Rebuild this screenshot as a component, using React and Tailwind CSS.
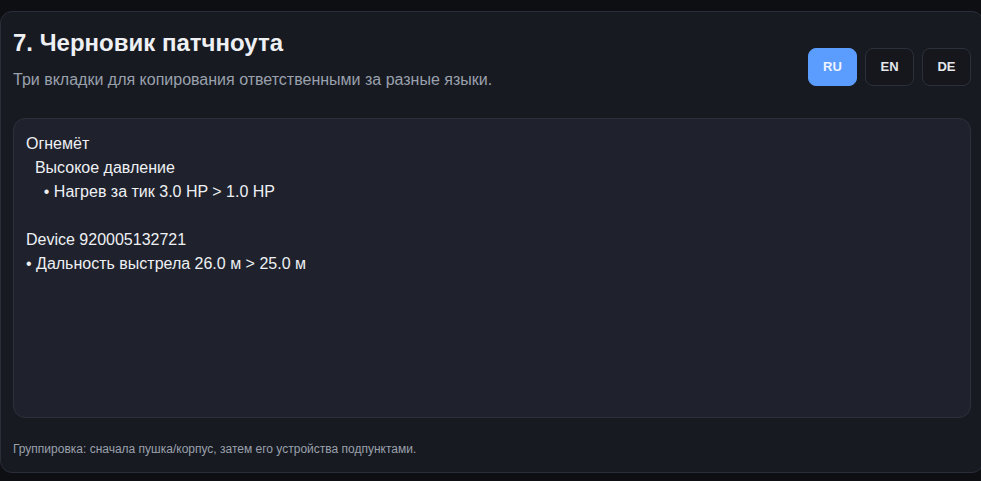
import { useState } from 'react';

const notes = {
  RU: `Огнемёт
  Высокое давление
    • Нагрев за тик 3.0 HP > 1.0 HP

Device 920005132721
• Дальность выстрела 26.0 м > 25.0 м`,
  EN: `Flamethrower
  High Pressure
    • Heat per tick 3.0 HP > 1.0 HP

Device 920005132721
• Firing range 26.0 m > 25.0 m`,
  DE: `Flammenwerfer
  Hochdruck
    • Hitze pro Tick 3.0 HP > 1.0 HP

Device 920005132721
• Schussweite 26.0 m > 25.0 m`,
};

export default function App() {
  const [lang, setLang] = useState('RU');

  return (
    <div className="min-h-[481px] overflow-hidden bg-[#0e0f13] pt-[11px] pb-[8px] font-['Liberation_Sans',Arial,sans-serif]">
      <section className="w-[984px] rounded-xl border border-[#2a2e38] bg-[#181a21] px-[12px] pt-[17px] pb-[15px]">
        {/* Header */}
        <div className="flex items-start justify-between">
          <div>
            <h2 className="text-[24px] font-bold leading-[28px] text-[#eef0f4]">7. Черновик патчноута</h2>
            <p className="mt-[13px] text-[16px] leading-[20px] text-[#9aa1ad]">
              Три вкладки для копирования ответственными за разные языки.
            </p>
          </div>
          <div className="mt-[19px] flex gap-[8px]">
            {['RU', 'EN', 'DE'].map(l => (
              <button
                key={l}
                onClick={() => setLang(l)}
                className={
                  lang === l
                    ? 'h-[38px] w-[49px] rounded-lg border border-[#5b9dff] bg-[#5b9dff] text-[13px] font-bold text-[#eef3fd]'
                    : 'h-[38px] w-[49px] rounded-lg border border-[#2c303a] bg-[#15171d] text-[13px] font-bold text-[#e4e7ec]'
                }
              >
                {l}
              </button>
            ))}
          </div>
        </div>

        {/* Draft text */}
        <div className="mt-[28px] h-[300px] rounded-xl border border-[#2c303b] bg-[#1f222c] px-[12px] pt-[13px] pb-[12px]">
          <pre className="whitespace-pre-wrap font-['Liberation_Sans',Arial,sans-serif] text-[16px] leading-[24px] text-[#eef0f4]">
            {notes[lang]}
          </pre>
        </div>

        <p className="mt-[23px] text-[12px] leading-[16px] text-[#9aa1ad]">
          Группировка: сначала пушка/корпус, затем его устройства подпунктами.
        </p>
      </section>
    </div>
  );
}
